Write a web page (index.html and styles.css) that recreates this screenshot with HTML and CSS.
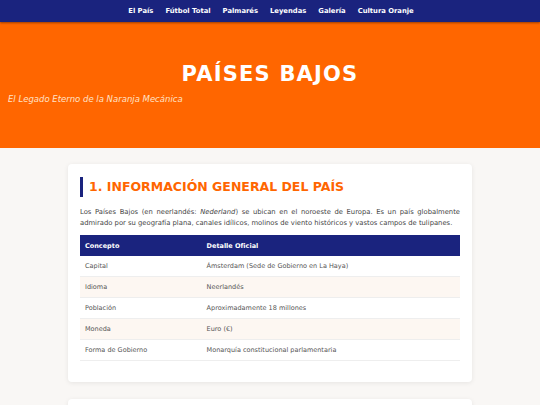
FILE: index.html
```html
<!DOCTYPE html>
<html lang="es">
<head>
  <meta charset="UTF-8">
  <meta name="viewport" content="width=device-width, initial-scale=1.0">
  <title>Países Bajos</title>
  <link rel="stylesheet" href="styles.css">
</head>
<body>
  <nav class="menu">
    <a href="#pais">El País</a>
    <a href="#futbol">Fútbol Total</a>
    <a href="#palmares">Palmarés</a>
    <a href="#leyendas">Leyendas</a>
    <a href="#galeria">Galería</a>
    <a href="#cultura">Cultura Oranje</a>
  </nav>

  <header class="portada">
    <h1>Países Bajos</h1>
    <p>El Legado Eterno de la Naranja Mecánica</p>
  </header>

  <main class="contenido">
    <section class="tarjeta" id="pais">
      <h2>1. Información General del País</h2>
      <p>Los Países Bajos (en neerlandés: <em>Nederland</em>) se ubican en el noroeste de Europa. Es un país globalmente admirado por su geografía plana, canales idílicos, molinos de viento históricos y vastos campos de tulipanes.</p>
      <table>
        <thead>
          <tr>
            <th>Concepto</th>
            <th>Detalle Oficial</th>
          </tr>
        </thead>
        <tbody>
          <tr><td>Capital</td><td>Ámsterdam (Sede de Gobierno en La Haya)</td></tr>
          <tr><td>Idioma</td><td>Neerlandés</td></tr>
          <tr><td>Población</td><td>Aproximadamente 18 millones</td></tr>
          <tr><td>Moneda</td><td>Euro (€)</td></tr>
          <tr><td>Forma de Gobierno</td><td>Monarquía constitucional parlamentaria</td></tr>
        </tbody>
      </table>
    </section>

    <section class="tarjeta" id="futbol">
      <h2>2. Fútbol Total</h2>
    </section>
  </main>
</body>
</html>
```

FILE: styles.css
```css
body {
  margin: 0;
  font-family: 'DejaVu Sans', Verdana, sans-serif;
  background-color: #f9f7f5;
  color: #333;
}

/* Barra de navegación */
.menu {
  display: flex;
  justify-content: center;
  align-items: center;
  gap: 12px;
  height: 22px;
  padding-left: 2px;
  background-color: #1a237e;
  box-shadow: 0 1px 2px rgba(0, 0, 0, 0.4);
  position: relative;
}
.menu a {
  color: #fff;
  text-decoration: none;
  font-size: 6.8px;
  font-weight: bold;
}

/* Cabecera naranja */
.portada {
  background-color: #ff6600;
  padding: 40px 8px 41px;
  height: 45px;
}
.portada h1 {
  margin: 0;
  text-align: center;
  text-transform: uppercase;
  color: #fff;
  font-size: 21px;
  letter-spacing: 1.2px;
  line-height: 24px;
}
.portada p {
  margin: 8px 0 0;
  color: #ffe2c8;
  font-style: italic;
  font-size: 8.5px;
}

/* Tarjetas */
.contenido {
  width: 404px;
  margin: 16px auto 0;
}
.tarjeta {
  background-color: #fff;
  border-radius: 4px;
  box-shadow: 0 1px 5px rgba(0, 0, 0, 0.08);
  padding: 13px 12px 21px;
  margin-bottom: 17px;
}
.tarjeta h2 {
  margin: 0 0 10px;
  padding-left: 6px;
  border-left: 3px solid #1a237e;
  color: #ff6600;
  font-size: 12.5px;
  line-height: 20px;
  text-transform: uppercase;
}
.tarjeta p {
  margin: 0 0 6px;
  font-size: 6.8px;
  line-height: 11px;
  text-align: justify;
  color: #444;
}

/* Tabla de datos */
table {
  width: 100%;
  border-collapse: collapse;
  font-size: 6.5px;
}
th {
  background-color: #1a237e;
  color: #fff;
  text-align: left;
  font-weight: bold;
  padding: 0 5px;
  height: 21px;
}
th:first-child {
  width: 32%;
}
td {
  padding: 0 5px;
  height: 20px;
  color: #555;
  border-bottom: 1px solid #eee;
}
tbody tr:nth-child(even) {
  background-color: #fdf7f2;
}
```
